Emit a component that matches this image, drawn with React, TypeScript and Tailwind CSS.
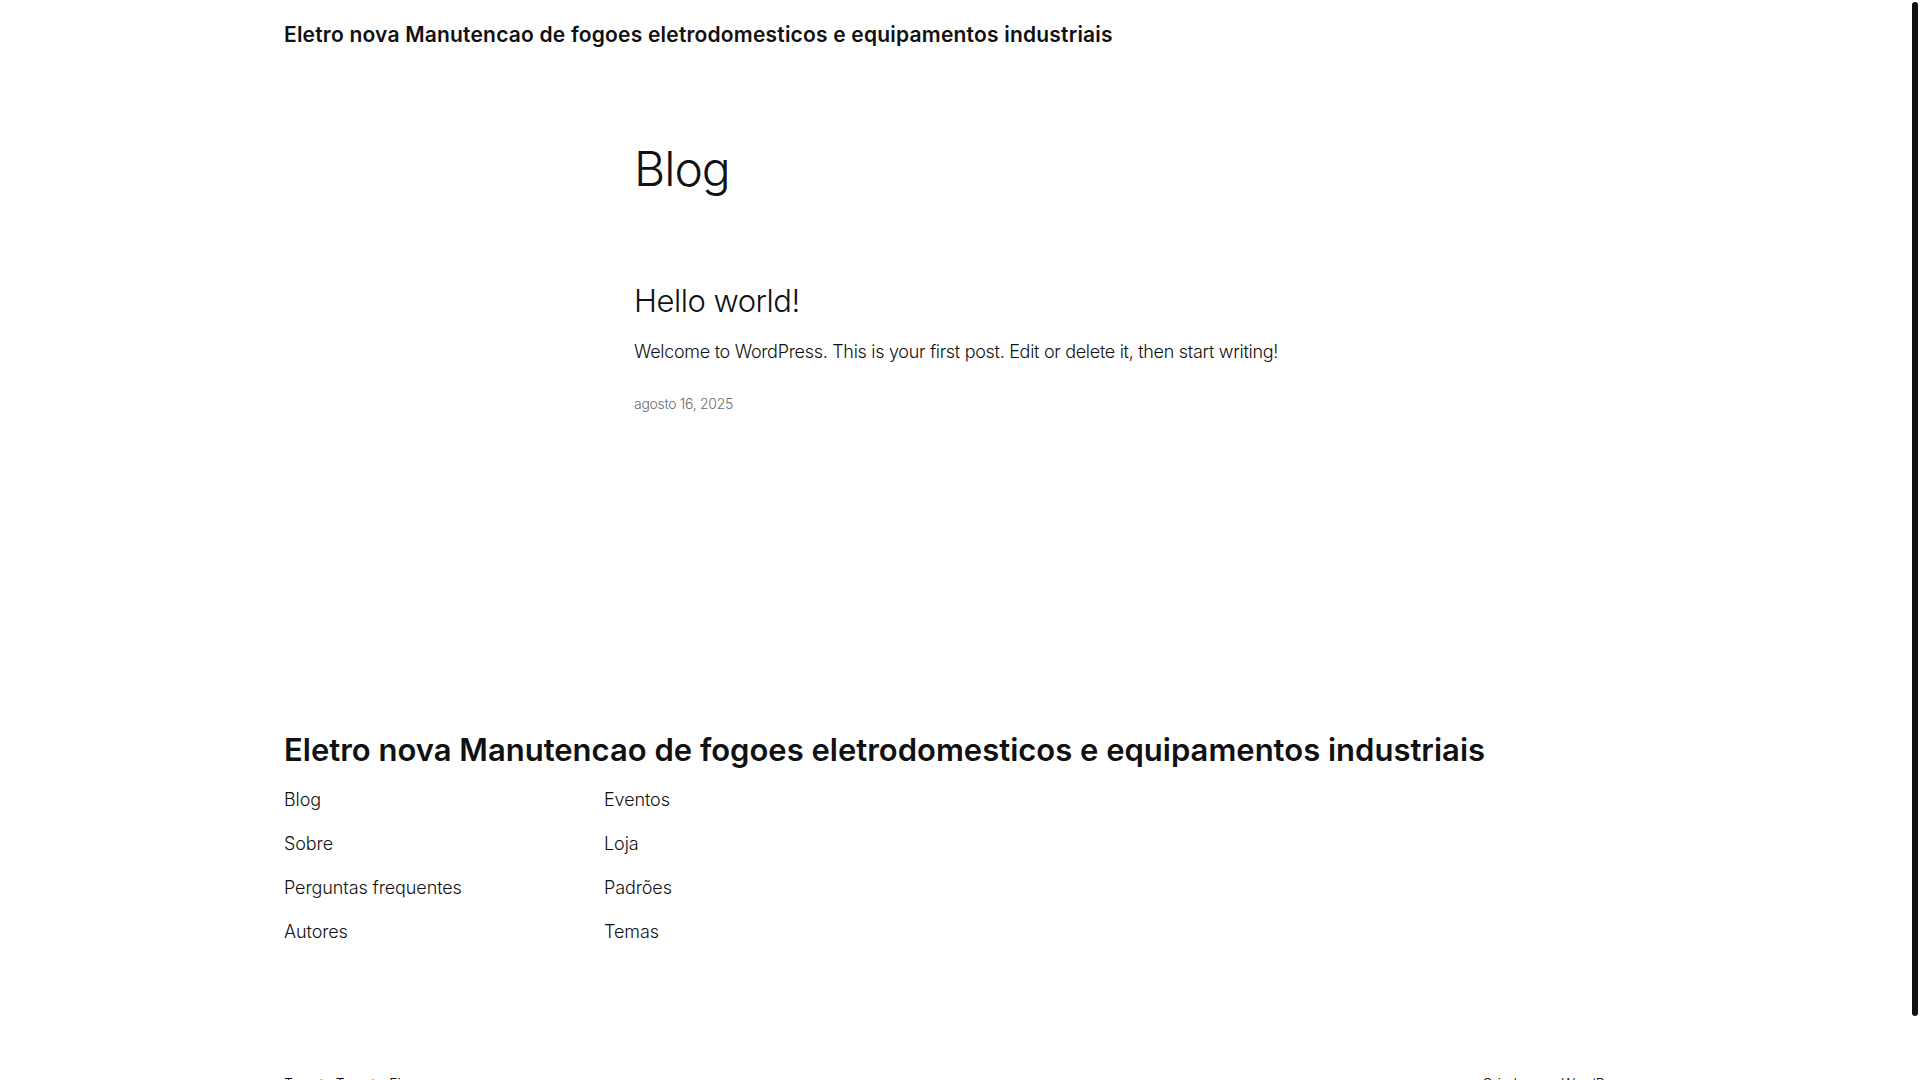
import React from "react";

const font = { fontFamily: "Inter, 'Noto Sans', sans-serif" };

export default function App() {
  const col1 = ["Blog", "Sobre", "Perguntas frequentes", "Autores"];
  const col2 = ["Eventos", "Loja", "Padrões", "Temas"];
  return (
    <div className="relative h-[1080px] w-full overflow-hidden bg-white text-[#111111]" style={font}>
      <header className="mx-auto w-[1352px] pt-[21px]">
        <a className="text-[21px] font-semibold leading-[28px] tracking-[0.2px]">
          Eletro nova Manutencao de fogoes eletrodomesticos e equipamentos industriais
        </a>
      </header>

      <main className="mx-auto w-[652px] pt-[91px]">
        <h1 className="text-[48px] font-light leading-[58px] tracking-[-1px]">Blog</h1>
        <article className="mt-[85px]">
          <h2 className="text-[31px] font-light leading-[36px] tracking-[-0.5px]">Hello world!</h2>
          <p className="mt-[19px] text-[18px] font-light leading-[28px] tracking-[-0.3px]">
            Welcome to WordPress. This is your first post. Edit or delete it, then start writing!
          </p>
          <div className="mt-[28px] text-[14px] font-light leading-[20px] tracking-[-0.3px] text-[#6b6b6b]">
            agosto 16, 2025
          </div>
        </article>
      </main>

      <footer className="mx-auto mt-[316px] w-[1352px]">
        <div className="text-[31px] font-semibold leading-[40px] tracking-[0px]">
          Eletro nova Manutencao de fogoes eletrodomesticos e equipamentos industriais
        </div>
        <div className="mt-[16px] flex">
          <ul className="flex w-[320px] flex-col gap-[16px]">
            {col1.map((t) => (
              <li key={t} className="text-[18px] font-light leading-[28px] tracking-[-0.1px]">{t}</li>
            ))}
          </ul>
          <ul className="flex w-[320px] flex-col gap-[16px]">
            {col2.map((t) => (
              <li key={t} className="text-[18px] font-light leading-[28px] tracking-[-0.1px]">{t}</li>
            ))}
          </ul>
        </div>
        <div className="mt-[128px] flex justify-between text-[14px] font-light leading-[20px]">
          <span>Twenty Twenty-Five</span>
          <span className="mr-[4px]">Criado com WordPress</span>
        </div>
      </footer>

      <div className="absolute right-[2px] top-[2px] h-[1014px] w-[6px] rounded-full bg-[#111111]" />
    </div>
  );
}
